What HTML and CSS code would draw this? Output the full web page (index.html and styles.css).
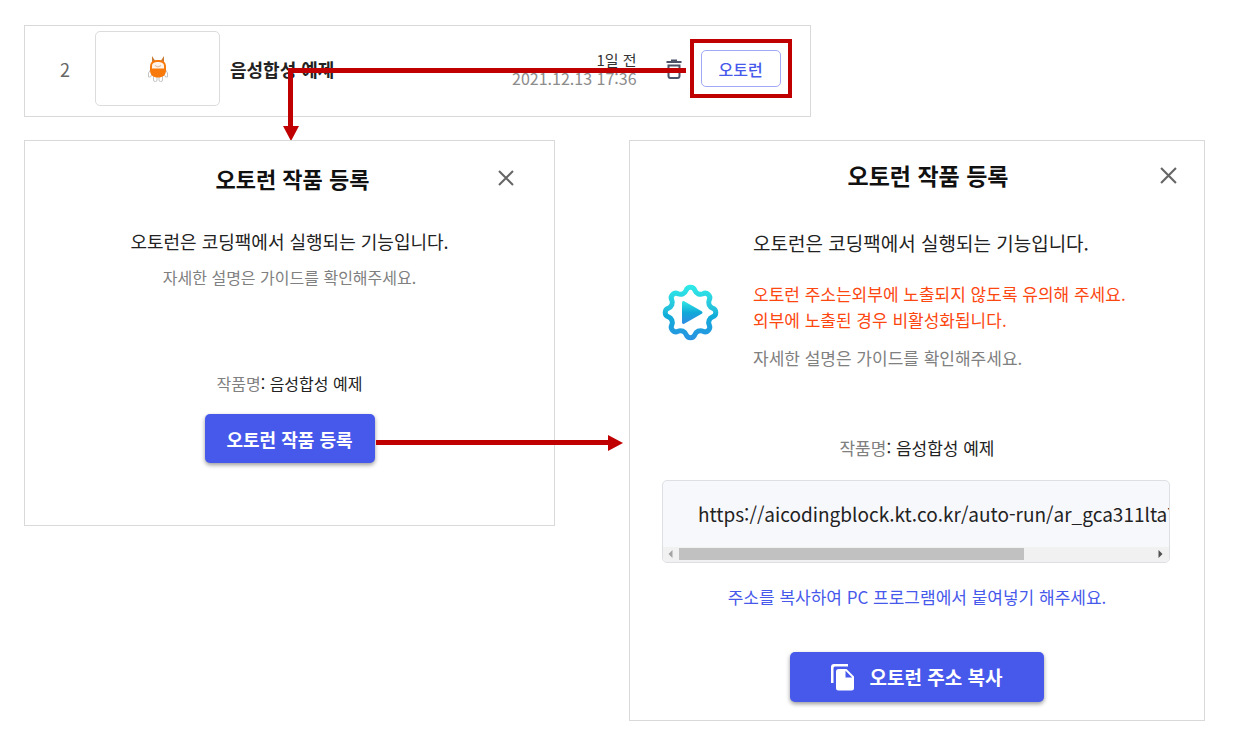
FILE: index.html
```html
<!DOCTYPE html>
<html lang="ko">
<head>
<meta charset="utf-8">
<meta name="viewport" content="width=device-width, initial-scale=1">
<title>오토런 작품 등록</title>
<link rel="stylesheet" href="styles.css">
</head>
<body>
<main class="page">
  <section class="work">
    <span class="work-number">2</span>
    <div class="work-thumb">
      <svg width="22" height="28" viewBox="0 0 22 28" aria-hidden="true">
        <g fill="#fff" stroke="#c4c4c4" stroke-width="1">
          <path d="M4 14L1.500 18V22H3.500L5.500 18Z"/>
          <path d="M18 14L20.500 18V22H18.500L16.500 18Z"/>
          <rect x="6.500" y="20" width="3.500" height="6.500" rx="1.500"/>
          <rect x="12" y="20" width="3.500" height="6.500" rx="1.500"/>
        </g>
        <path d="M5 8L5 1L8 5.500H14L17 1L17 8Z" fill="#c97a35"/>
        <path d="M3 12C3 7 6 5 11 5S19 7 19 12V15C19 20 16 22.500 11 22.500S3 20 3 15Z" fill="#f97a0c"/>
        <path d="M5 11C5 8 7.500 7 11 7S17 8 17 11V13.500H5Z" fill="#fff3ea"/>
        <path d="M8 10.500Q11 13.500 14 10.500" fill="none" stroke="#d7b49a"/>
      </svg>
    </div>
    <strong class="work-name">음성합성 예제</strong>
    <div class="work-date">
      <span class="work-ago">1일 전</span>
      <time datetime="2021-12-13T17:36">2021.12.13 17:36</time>
    </div>
    <button class="icon-button" type="button" aria-label="삭제">
      <svg width="16" height="20" viewBox="0 0 16 20" fill="none" stroke="#4c5268" stroke-width="2" aria-hidden="true">
        <path d="M0.500 3H15.500M5 1.500H11"/>
        <path d="M2.500 6.500V17Q2.500 19 4.500 19H11.500Q13.500 19 13.500 17V6.500Z"/>
      </svg>
    </button>
    <div class="highlight">
      <button class="outline-button" type="button">오토런</button>
    </div>
    <div class="arrow arrow-down"></div>
  </section>

  <section class="dialog dialog-register">
    <header class="dialog-header">
      <h2>오토런 작품 등록</h2>
      <button class="icon-button" type="button" aria-label="닫기">
        <svg width="16" height="16" viewBox="0 0 16 16" fill="none" stroke="#666" stroke-width="2" aria-hidden="true"><path d="M1 1L15 15M15 1L1 15"/></svg>
      </button>
    </header>
    <p class="lead">오토런은 코딩팩에서 실행되는 기능입니다.</p>
    <p class="hint">자세한 설명은 가이드를 확인해주세요.</p>
    <p class="name-line"><span>작품명</span>: 음성합성 예제</p>
    <button class="primary-button" type="button">오토런 작품 등록</button>
    <div class="arrow arrow-right"></div>
  </section>

  <section class="dialog dialog-address">
    <header class="dialog-header">
      <h2>오토런 작품 등록</h2>
      <button class="icon-button" type="button" aria-label="닫기">
        <svg width="17" height="17" viewBox="0 0 16 16" fill="none" stroke="#666" stroke-width="2" aria-hidden="true"><path d="M1 1L15 15M15 1L1 15"/></svg>
      </button>
    </header>
    <div class="notice">
      <svg class="notice-icon" width="57" height="57" viewBox="-28.500 -28.500 57 57" aria-hidden="true">
        <defs>
          <linearGradient id="ring" gradientUnits="userSpaceOnUse" x1="0" y1="-28" x2="0" y2="28">
            <stop offset="0" stop-color="#2fece8"/><stop offset=".45" stop-color="#25bfdc"/><stop offset=".55" stop-color="#0fadd9"/><stop offset="1" stop-color="#2b92e2"/>
          </linearGradient>
          <linearGradient id="play" x1="0" y1="0" x2="0" y2="1">
            <stop offset="0" stop-color="#2fe0e3"/><stop offset=".5" stop-color="#10a9d8"/><stop offset="1" stop-color="#2c8fe2"/>
          </linearGradient>
        </defs>
        <path fill="none" stroke="url(#ring)" stroke-width="5" d="M-4.390-22.070A4.600 4.600 0 0 1 4.390-22.070A6 6 0 0 0 12.500-18.710A4.600 4.600 0 0 1 18.710-12.500A6 6 0 0 0 22.070-4.390A4.600 4.600 0 0 1 22.070 4.390A6 6 0 0 0 18.710 12.500A4.600 4.600 0 0 1 12.500 18.710A6 6 0 0 0 4.390 22.070A4.600 4.600 0 0 1-4.390 22.070A6 6 0 0 0-12.500 18.710A4.600 4.600 0 0 1-18.710 12.500A6 6 0 0 0-22.070 4.390A4.600 4.600 0 0 1-22.070-4.390A6 6 0 0 0-18.710-12.500A4.600 4.600 0 0 1-12.500-18.710A6 6 0 0 0-4.390-22.070Z"/>
        <path d="M-7-10L10.500 0L-7 10Z" fill="url(#play)" stroke="url(#play)" stroke-width="3" stroke-linejoin="round"/>
      </svg>
      <div class="notice-text">
        <p class="lead">오토런은 코딩팩에서 실행되는 기능입니다.</p>
        <p class="warning">오토런 주소는외부에 노출되지 않도록 유의해 주세요.<br>외부에 노출된 경우 비활성화됩니다.</p>
        <p class="hint">자세한 설명은 가이드를 확인해주세요.</p>
      </div>
    </div>
    <p class="name-line"><span>작품명</span>: 음성합성 예제</p>
    <div class="address">
      <div class="address-text">https://aicodingblock.kt.co.kr/auto-run/ar_gca311lta7</div>
      <div class="scrollbar">
        <svg width="5" height="8" viewBox="0 0 5 8" aria-hidden="true"><path d="M4.500 0V8L.5 4Z" fill="#a3a3a3"/></svg>
        <div class="scroll-track"><div class="scroll-thumb"></div></div>
        <svg width="5" height="8" viewBox="0 0 5 8" aria-hidden="true"><path d="M.5 0V8L4.500 4Z" fill="#505050"/></svg>
      </div>
    </div>
    <p class="guide">주소를 복사하여 PC 프로그램에서 붙여넣기 해주세요.</p>
    <button class="primary-button" type="button">
      <svg width="23" height="27" viewBox="0 0 23 27" fill="#fff" aria-hidden="true">
        <path d="M0 19V3Q0 0 3 0H17V2.500H4Q2.500 2.500 2.500 4V19Z"/>
        <path fill-rule="evenodd" d="M7.500 5H15.500L23 12.500V24Q23 26.500 20.500 26.500H7.500Q5 26.500 5 24V7.500Q5 5 7.500 5ZM14.500 6.800V13.500H21.200Z"/>
      </svg>
      오토런 주소 복사
    </button>
  </section>
</main>
</body>
</html>
```
FILE: styles.css
```css
:root {
  --line: #d9d9d9;
  --blue: #4759eb;
  --red: #c00000;
  --gray: #808080;
}

* {
  box-sizing: border-box;
}

body {
  margin: 0;
  background: #fff;
  color: #222;
  font: 16px/24px "Noto Sans CJK KR", sans-serif;
}

h2,
p {
  margin: 0;
}

button {
  font: inherit;
  cursor: pointer;
}

.page {
  display: grid;
  grid-template-columns: minmax(0, 531fr) minmax(0, 576fr);
  gap: 23px 74px;
  align-items: start;
  padding: 25px 34px 32px 24px;
}

.work {
  position: relative;
  grid-column: 1 / -1;
  display: flex;
  align-items: center;
  width: 66.6%;
  min-width: 680px;
  padding: 5px 18px 10px 10px;
  border: 1px solid var(--line);
}

.work-number {
  width: 60px;
  color: #666;
  font-size: 18px;
  text-align: center;
}

.work-thumb {
  display: grid;
  place-items: center;
  width: 125px;
  height: 75px;
  border: 1px solid #dcdcdc;
  border-radius: 5px;
}

.work-name {
  flex: 1;
  margin-left: 10px;
  font-size: 18px;
}

.work-date {
  display: flex;
  flex-direction: column;
  color: #8c8c8c;
  line-height: 19px;
  text-align: right;
}

.work-ago {
  color: #333;
  font-size: 15px;
}

.icon-button {
  display: flex;
  padding: 0;
  border: 0;
  background: none;
}

.work .icon-button {
  margin: 0 8px 0 29px;
}

.highlight {
  padding: 7px;
  border: 4px solid var(--red);
}

.outline-button {
  display: block;
  width: 80px;
  height: 37px;
  padding: 0;
  border: 1px solid #a0a9f6;
  border-radius: 5px;
  background: #fff;
  color: var(--blue);
  font-weight: 500;
}

.arrow {
  position: absolute;
}

.arrow::after {
  content: "";
  position: absolute;
  border: 8px solid transparent;
}

.arrow-down {
  top: 42px;
  right: 124px;
  left: 263px;
  height: 60px;
  border-top: 5px solid var(--red);
  border-left: 5px solid var(--red);
}

.arrow-down::after {
  top: 53px;
  left: -10px;
  border-top: 15px solid var(--red);
  border-bottom: 0;
}

.arrow-right {
  top: 299px;
  right: -56px;
  left: 351px;
  height: 5px;
  background: var(--red);
}

.arrow-right::after {
  top: -5px;
  right: -13px;
  border-left: 15px solid var(--red);
  border-right: 0;
}

.dialog {
  position: relative;
  display: flex;
  flex-direction: column;
  align-items: center;
  border: 1px solid var(--line);
}

.dialog-header {
  display: grid;
  grid-template-columns: 1fr auto 1fr;
  align-items: center;
  align-self: stretch;
}

.dialog-header h2 {
  grid-column: 2;
  color: #111;
  font-size: 22px;
  line-height: 38px;
}

.dialog-header .icon-button {
  justify-self: end;
}

.lead {
  font-size: 19px;
  line-height: 28px;
}

.hint,
.name-line span {
  color: var(--gray);
}

.dialog-register {
  padding: 18px 0 62px;
}

.dialog-register .dialog-header {
  padding: 0 40px 0 46px;
}

.dialog-register .lead {
  margin-top: 30px;
  font-size: 18px;
}

.dialog-register .hint {
  margin-top: 10px;
}

.dialog-register .name-line {
  margin-top: 82px;
}

.primary-button {
  display: flex;
  align-items: center;
  justify-content: center;
  gap: 15px;
  border: 0;
  border-radius: 5px;
  background: var(--blue);
  box-shadow: 0 2px 4px rgba(0, 0, 0, 0.4);
  color: #fff;
  font-weight: 700;
}

.dialog-register .primary-button {
  width: 170px;
  height: 49px;
  margin-top: 19px;
  padding: 0;
  font-size: 18px;
}

.dialog-address {
  padding: 15px 0 18px;
  font-size: 17px;
}

.dialog-address .dialog-header {
  padding: 0 27px 0 49px;
}

.dialog-address h2 {
  font-size: 23px;
}

.notice {
  display: flex;
  align-items: center;
  align-self: stretch;
  gap: 34px;
  margin-top: 35px;
  padding: 0 32px;
}

.notice-icon {
  flex: none;
  margin-top: 25px;
}

.warning {
  margin: 24px 0 13px;
  color: #fd4711;
  line-height: 26px;
}

.dialog-address .name-line {
  margin-top: 66px;
}

.address {
  align-self: stretch;
  margin: 20px 34px 0 32px;
  overflow: hidden;
  border: 1px solid #dedfe3;
  border-radius: 5px;
  background: #f7f8fc;
}

.address-text {
  overflow: hidden;
  padding: 18px 0 18px 35px;
  font-size: 19px;
  line-height: 30px;
  white-space: nowrap;
}

.scrollbar {
  display: flex;
  align-items: center;
  gap: 6px;
  padding: 1px 6px 2px 5px;
  background: #f1f1f1;
}

.scroll-track {
  flex: 1;
}

.scroll-thumb {
  width: 73%;
  height: 12px;
  background: #c1c1c1;
}

.guide {
  margin-top: 22px;
  color: var(--blue);
}

.dialog-address .primary-button {
  width: 254px;
  height: 50px;
  margin-top: 43px;
  padding: 0;
  font-size: 19px;
}
```
